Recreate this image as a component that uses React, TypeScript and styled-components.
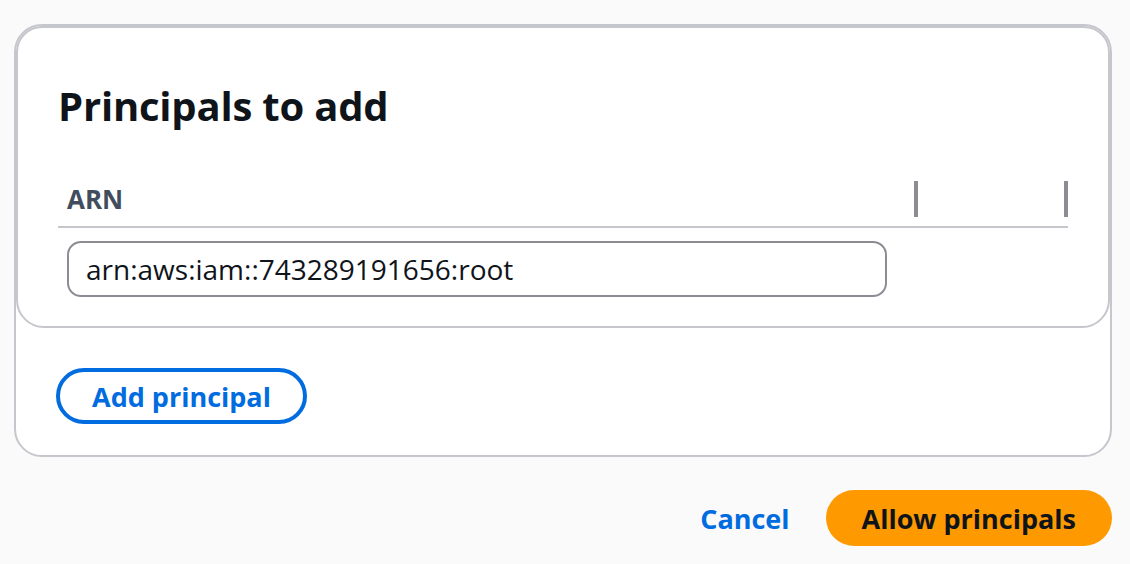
import React from "react";
import styled, { createGlobalStyle } from "styled-components";

const GlobalStyle = createGlobalStyle`
  html, body {
    margin: 0;
    padding: 0;
    background: #fafafa;
    font-family: "Open Sans", "Noto Sans", Arial, sans-serif;
    color: #0f141a;
  }
  * { box-sizing: border-box; }
`;

const Page = styled.div`
  padding: 24px 18px 0 14px;
`;

const Card = styled.section`
  border: 2px solid #c6c6cd;
  border-radius: 28px;
  background: #ffffff;
`;

const TableCard = styled.div`
  border: 2px solid #c6c6cd;
  border-radius: 26px 26px 28px 28px;
  background: #ffffff;
  padding: 54px 40px 17px 40px;
`;

const Heading = styled.h2`
  margin: 0;
  font-size: 40px;
  line-height: 48px;
  font-weight: 700;
  color: #0f141a;
  letter-spacing: -0.2px;
`;

const Table = styled.div`
  margin-top: 42px;
  display: grid;
  grid-template-columns: 860px 150px;
`;

const HeaderCell = styled.div`
  height: 56px;
  border-bottom: 2px solid #c6c6cd;
  display: flex;
  align-items: center;
  justify-content: space-between;
  padding-left: 9px;
  font-size: 26px;
  font-weight: 700;
  color: #414d5c;
`;

const Resizer = styled.span`
  width: 4px;
  height: 36px;
  background: #8c8c94;
`;

const BodyCell = styled.div`
  padding: 13px 0 12px 9px;
`;

const TextInput = styled.input`
  display: block;
  width: 820px;
  height: 56px;
  border: 2px solid #8c8c94;
  border-radius: 14px;
  padding: 0 17px;
  font-family: "Open Sans", "Noto Sans", Arial, sans-serif;
  font-size: 28px;
  color: #0f141a;
  background: #ffffff;
  outline: none;
`;

const Footer = styled.div`
  padding: 40px 40px 31px 40px;
`;

const Button = styled.button<{ $variant: "normal" | "primary" | "link" }>`
  height: 56px;
  border-radius: 28px;
  font-family: "Open Sans", "Noto Sans", Arial, sans-serif;
  font-size: 27px;
  font-weight: 700;
  cursor: pointer;
  display: inline-flex;
  align-items: center;
  justify-content: center;
  ${(p) =>
    p.$variant === "normal" &&
    `
    border: 4px solid #006ce0;
    background: #ffffff;
    color: #006ce0;
    padding: 0 32px;
  `}
  ${(p) =>
    p.$variant === "primary" &&
    `
    border: none;
    background: #ff9900;
    color: #0f141a;
    padding: 0 36px;
  `}
  ${(p) =>
    p.$variant === "link" &&
    `
    border: none;
    background: transparent;
    color: #006ce0;
    padding: 0 22px;
  `}
`;

const Actions = styled.div`
  margin-top: 33px;
  display: flex;
  justify-content: flex-end;
  gap: 14px;
`;

export default function App() {
  return (
    <>
      <GlobalStyle />
      <Page>
        <Card>
          <TableCard>
            <Heading>Principals to add</Heading>
            <Table>
              <HeaderCell>
                ARN
                <Resizer />
              </HeaderCell>
              <HeaderCell>
                <span />
                <Resizer />
              </HeaderCell>
              <BodyCell>
                <TextInput readOnly defaultValue="arn:aws:iam::743289191656:root" />
              </BodyCell>
              <BodyCell />
            </Table>
          </TableCard>
          <Footer>
            <Button $variant="normal">Add principal</Button>
          </Footer>
        </Card>
        <Actions>
          <Button $variant="link">Cancel</Button>
          <Button $variant="primary">Allow principals</Button>
        </Actions>
      </Page>
    </>
  );
}
